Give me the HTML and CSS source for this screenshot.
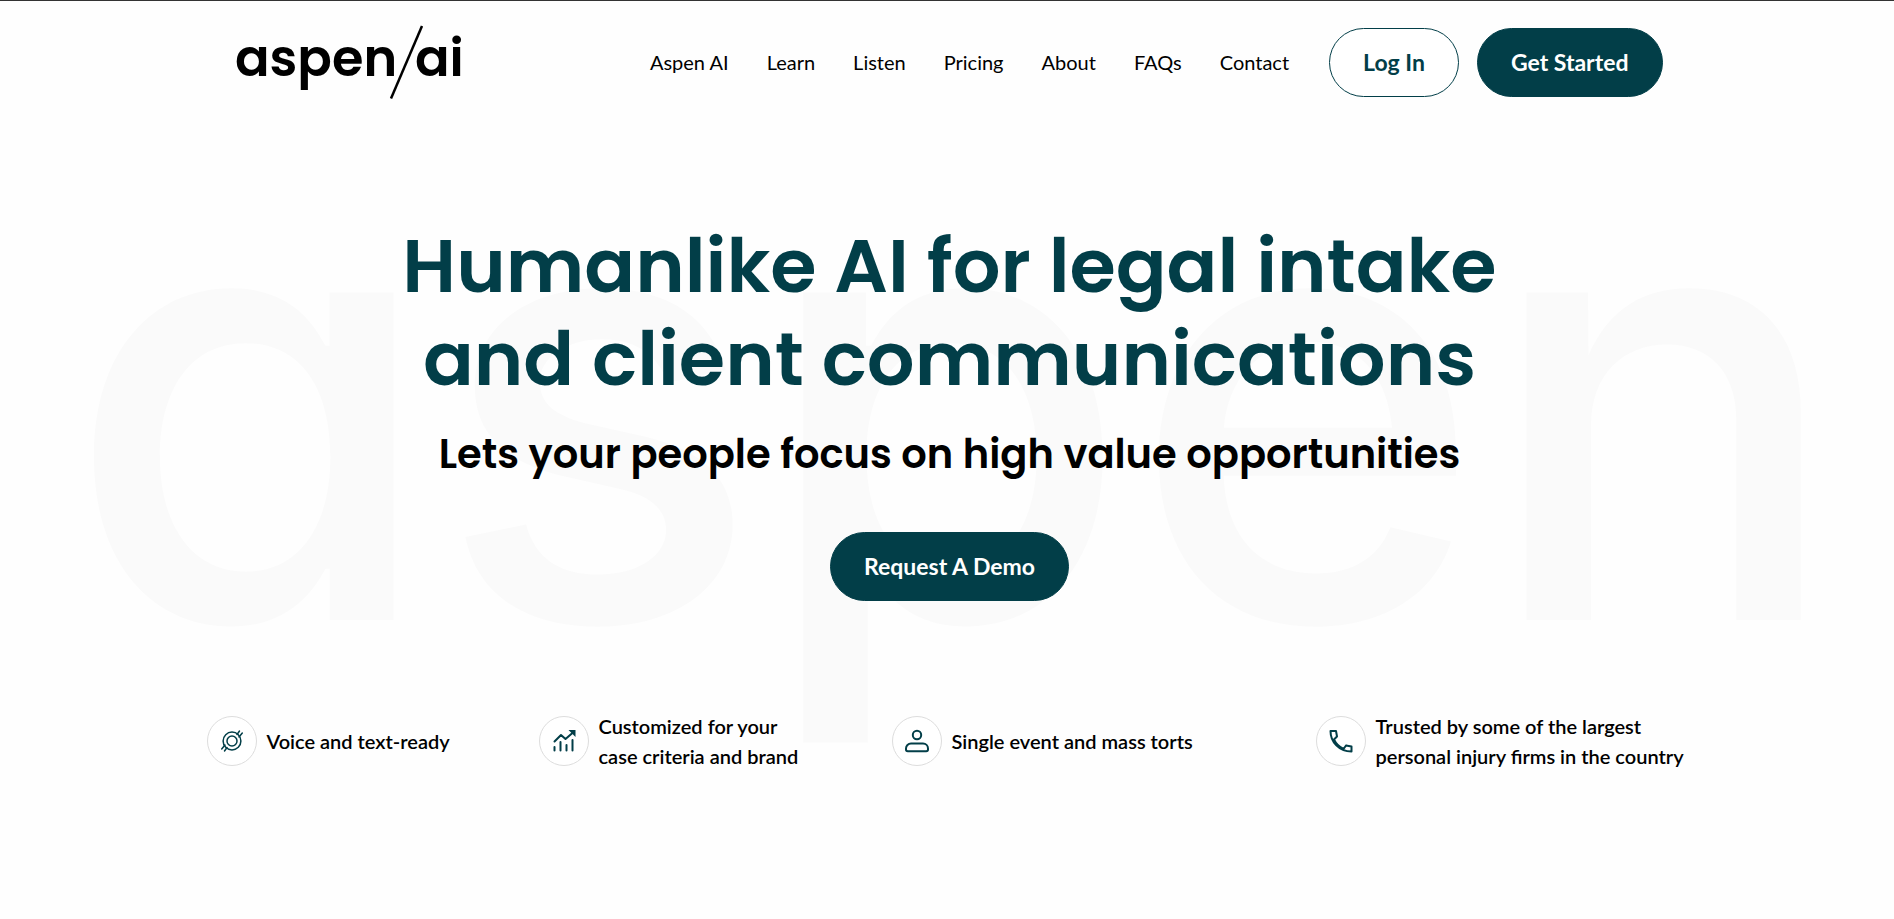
FILE: index.html
```html
<!DOCTYPE html>
<html lang="en">
<head>
<meta charset="utf-8">
<title>Aspen AI</title>
<meta name="viewport" content="width=device-width, initial-scale=1">
<link rel="stylesheet" href="styles.css">
</head>
<body>
<header class="header">
  <a class="logo" href="#" aria-label="aspen/ai home">
    <svg viewBox="0 0 226 74" width="226" height="74" aria-hidden="true">
      <text class="logo-text" x="-2" y="51">aspen</text>
      <path d="M154 73.500 L185 1" stroke="#000" stroke-width="2.500"/>
      <text class="logo-text" x="178" y="51">ai</text>
    </svg>
  </a>
  <nav class="nav" aria-label="Main">
    <a href="#">Aspen AI</a>
    <a href="#">Learn</a>
    <a href="#">Listen</a>
    <a href="#">Pricing</a>
    <a href="#">About</a>
    <a href="#">FAQs</a>
    <a href="#">Contact</a>
  </nav>
  <div class="actions">
    <a class="button button-outline" href="#">Log In</a>
    <a class="button" href="#">Get Started</a>
  </div>
</header>
<main class="hero">
  <svg class="watermark" viewBox="0 0 1894 800" aria-hidden="true">
    <text class="watermark-text" x="955" y="620" text-anchor="middle">aspen</text>
  </svg>
  <h1 class="title">Humanlike AI for legal intake<br>and client communications</h1>
  <h2 class="subtitle">Lets your people focus on high value opportunities</h2>
  <a class="button" href="#">Request A Demo</a>
  <ul class="features">
    <li class="feature">
      <span class="badge"><svg viewBox="0 0 24 24" width="24" height="24" aria-hidden="true"><circle cx="12" cy="12" r="8.900"/><circle cx="12" cy="12" r="5"/><path d="M17 5.500 19.500 2M19 8 22.300 4M1.700 20 5 16M4.500 22 7 18.500"/></svg></span>
      <span>Voice and text-ready</span>
    </li>
    <li class="feature">
      <span class="badge"><svg viewBox="0 0 24 24" width="24" height="24" aria-hidden="true"><path class="bold" d="M2.500 21.500V18M8.500 21.500V13M14.500 21.500V16M20.500 21.500V11M2.500 12.500 9 6l4.500 4L21 3.500"/><path class="solid" d="M16.500 1H23.500V8z"/></svg></span>
      <span>Customized for your<br>case criteria and brand</span>
    </li>
    <li class="feature">
      <span class="badge"><svg viewBox="0 0 24 24" width="24" height="24" aria-hidden="true"><circle class="bold" cx="12" cy="6" r="4.200"/><path class="bold" d="M6 14.500h12a5 5 0 0 1 5 5v1a1.800 1.800 0 0 1-1.800 1.800h-18.400a1.800 1.800 0 0 1-1.800-1.800v-1a5 5 0 0 1 5-5z"/></svg></span>
      <span>Single event and mass torts</span>
    </li>
    <li class="feature">
      <span class="badge"><svg viewBox="0 0 24 24" width="24" height="24" aria-hidden="true"><path class="bold" d="M1.500 2H7l1 5.500-3 3C7 15 10 17.800 14.500 20l2.500-3.500 5.500 1V22.500C10 22.500 1.500 13 1.500 2zM5 10.500 8 7.500M14.500 20 17 16.500"/></svg></span>
      <span>Trusted by some of the largest<br>personal injury firms in the country</span>
    </li>
  </ul>
</main>
</body>
</html>
```
FILE: styles.css
```css
* {
  box-sizing: border-box;
}

body {
  margin: 0;
  padding-left: 5px;
  border-top: 1px solid #333;
  background: #fefefe;
  color: #000;
  font-family: Lato, "Open Sans", sans-serif;
}

a {
  color: inherit;
  text-decoration: none;
}

.header {
  display: flex;
  align-items: center;
  width: 100%;
  max-width: 1426px;
  margin: 0 auto;
  padding-top: 24px;
}

.logo {
  display: block;
  height: 74px;
}

.logo svg {
  overflow: visible;
}

.logo-text {
  font: 600 51px Poppins, Inter, sans-serif;
}

.nav {
  display: flex;
  gap: 38px;
  margin-left: auto;
  font-size: 20px;
  line-height: 30px;
}

.actions {
  display: flex;
  gap: 18px;
  margin-left: 40px;
}

.button {
  display: inline-block;
  padding: 18px 33px;
  border: 1px solid #023e48;
  border-radius: 35px;
  background: #023e48;
  color: #fff;
  font-size: 23px;
  font-weight: 700;
  line-height: 31px;
  white-space: nowrap;
}

.button-outline {
  background: #fff;
  color: #023e48;
}

.hero {
  position: relative;
  display: flex;
  flex-direction: column;
  align-items: center;
  padding-top: 120px;
}

.watermark {
  position: absolute;
  z-index: -1;
  top: -99px;
  left: -5px;
  width: 100vw;
}

.watermark-text {
  fill: #fafafa;
  font: 500 600px Inter, sans-serif;
  font-feature-settings: "cv11";
}

.title,
.subtitle {
  margin: 0;
  font-family: Poppins, Inter, sans-serif;
  font-weight: 600;
  text-align: center;
}

.title {
  color: #023e48;
  font-size: 75px;
  line-height: 93px;
}

.subtitle {
  margin: 16px 0 45px;
  font-size: 40px;
  line-height: 66px;
}

.features {
  display: grid;
  grid-template-columns: 332fr 353fr 424fr 377fr;
  align-items: center;
  width: 100%;
  max-width: 1486px;
  margin: 110px 0 0;
  padding: 0;
  list-style: none;
  font-size: 20px;
  font-weight: 600;
  line-height: 30px;
}

.feature {
  display: flex;
  align-items: center;
  gap: 10px;
  white-space: nowrap;
}

.badge {
  display: flex;
  flex: none;
  align-items: center;
  justify-content: center;
  width: 50px;
  height: 50px;
  border: 1px solid #ddd;
  border-radius: 50%;
  background: #fff;
}

.badge svg {
  fill: none;
  stroke: #023e48;
  stroke-width: 1.5;
  stroke-linecap: round;
  stroke-linejoin: round;
}

.badge .bold {
  stroke-width: 2;
}

.badge .solid {
  fill: #023e48;
  stroke: none;
}
```
